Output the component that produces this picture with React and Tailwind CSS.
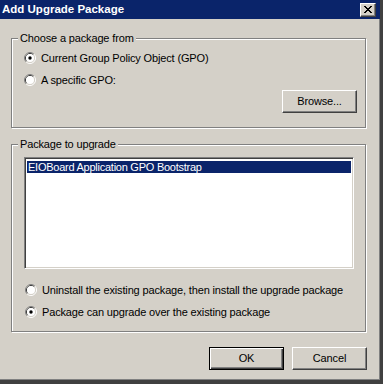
import React from "react";

function Radio({ checked }) {
  return (
    <svg width="12" height="12" viewBox="0 0 12 12" className="shrink-0">
      <path d="M2.11 9.89 A5.5 5.5 0 0 1 9.89 2.11" fill="none" stroke="#808080" strokeWidth="1" />
      <path d="M9.89 2.11 A5.5 5.5 0 0 1 2.11 9.89" fill="none" stroke="#ffffff" strokeWidth="1" />
      <path d="M2.82 9.18 A4.5 4.5 0 0 1 9.18 2.82" fill="none" stroke="#404040" strokeWidth="1" />
      <path d="M9.18 2.82 A4.5 4.5 0 0 1 2.82 9.18" fill="none" stroke="#d4d0c8" strokeWidth="1" />
      <circle cx="6" cy="6" r="4" fill="#ffffff" />
      {checked && <circle cx="6" cy="6" r="1.7" fill="#000000" />}
    </svg>
  );
}

function RadioRow({ checked, children, className = "" }) {
  return (
    <div className={"flex items-center h-[16px] gap-[5px] " + className}>
      <Radio checked={checked} />
      <span className="leading-[16px] whitespace-nowrap">{children}</span>
    </div>
  );
}

function Button({ children, isDefault, className = "" }) {
  if (isDefault) {
    return (
      <div
        className={
          "w-[75px] h-[23px] flex items-center justify-center border border-black shadow-[inset_1px_1px_0_#ffffff,inset_-1px_-1px_0_#404040,inset_-2px_-2px_0_#808080] " +
          className
        }
      >
        {children}
      </div>
    );
  }
  return (
    <div
      className={
        "w-[75px] h-[23px] flex items-center justify-center border border-t-white border-l-white border-r-[#404040] border-b-[#404040] shadow-[inset_-1px_-1px_0_#808080] " +
        className
      }
    >
      {children}
    </div>
  );
}

function Group({ label, className = "", children }) {
  return (
    <div
      className={
        "relative ml-[11px] w-[355px] border border-[#808080] shadow-[1px_1px_0_#ffffff,inset_1px_1px_0_#ffffff] " +
        className
      }
    >
      <div className="absolute left-[6px] top-[-7px] px-[2px] bg-[#d4d0c8] leading-[13px] whitespace-nowrap">
        {label}
      </div>
      {children}
    </div>
  );
}

function CloseGlyph() {
  const px = [
    [0, 0], [1, 0], [6, 0], [7, 0],
    [1, 1], [2, 1], [5, 1], [6, 1],
    [2, 2], [3, 2], [4, 2], [5, 2],
    [3, 3], [4, 3],
    [2, 4], [3, 4], [4, 4], [5, 4],
    [1, 5], [2, 5], [5, 5], [6, 5],
    [0, 6], [1, 6], [6, 6], [7, 6],
  ];
  return (
    <svg width="8" height="7" viewBox="0 0 8 7" shapeRendering="crispEdges">
      {px.map(([x, y], i) => (
        <rect key={i} x={x} y={y} width="1" height="1" fill="#000" />
      ))}
    </svg>
  );
}

export default function App() {
  return (
    <div className="w-[383px] h-[384px] bg-[#d4d0c8] border-r-[3px] border-r-[#404040] border-b-[4px] border-b-[#404040] shadow-[inset_-1px_-1px_0_#808080] flex flex-col font-['Liberation_Sans',Arial,sans-serif] text-[11px] text-black tracking-[-0.15px] overflow-hidden">
      {/* Title bar */}
      <div className="h-[19px] bg-[#0a246a] flex items-center justify-between pl-[2px] pr-[4px]">
        <span className="text-white font-bold text-[11.5px] leading-[19px] tracking-[0px]">
          Add Upgrade Package
        </span>
        <div className="w-[16px] h-[14px] bg-[#d4d0c8] border border-t-white border-l-white border-r-[#404040] border-b-[#404040] shadow-[inset_-1px_-1px_0_#808080] flex items-center justify-center">
          <CloseGlyph />
        </div>
      </div>

      {/* Group 1 */}
      <Group label="Choose a package from" className="mt-[19px] h-[90px]">
        <div className="flex flex-col pt-[11px] pl-[12px] pr-[8px]">
          <RadioRow checked>Current Group Policy Object (GPO)</RadioRow>
          <RadioRow className="mt-[6px]">A specific GPO:</RadioRow>
          <Button className="self-end mt-[2px]">Browse...</Button>
        </div>
      </Group>

      {/* Group 2 */}
      <Group label="Package to upgrade" className="mt-[16px] h-[188px]">
        <div className="flex flex-col pt-[12px] pl-[12px]">
          <div className="w-[330px] h-[112px] bg-white border border-t-[#808080] border-l-[#808080] border-r-white border-b-white shadow-[inset_1px_1px_0_#404040,inset_-1px_-1px_0_#d4d0c8] p-[2px] pt-[3px]">
            <div className="h-[12px] bg-[#0a246a] text-white leading-[12px] pl-[1px] whitespace-nowrap tracking-[-0.25px]">
              EIOBoard Application GPO Bootstrap
            </div>
          </div>
          <div className="pl-[1px]">
            <RadioRow className="mt-[13px]">
              Uninstall the existing package, then install the upgrade package
            </RadioRow>
            <RadioRow checked className="mt-[6px]">
              Package can upgrade over the existing package
            </RadioRow>
          </div>
        </div>
      </Group>

      {/* Buttons */}
      <div className="mt-[15px] flex gap-[8px] pl-[209px]">
        <Button isDefault>OK</Button>
        <Button>Cancel</Button>
      </div>
    </div>
  );
}
